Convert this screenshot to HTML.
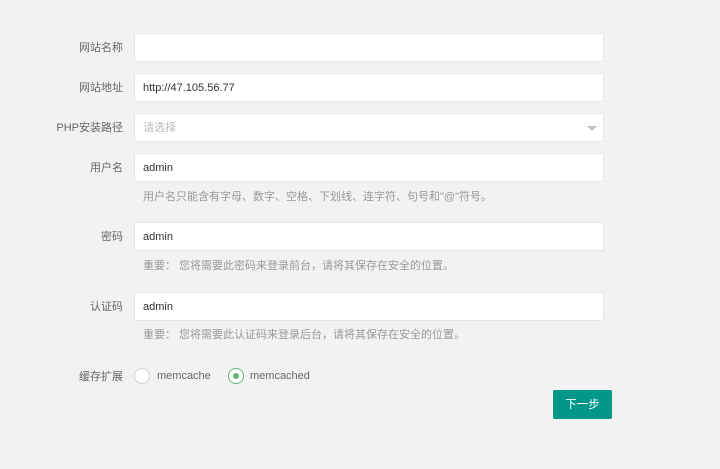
<!DOCTYPE html>
<html><head><meta charset="utf-8"><style>
body{margin:0;width:720px;height:469px;background:#f2f2f2;font-family:"Liberation Sans","Noto Sans CJK SC",sans-serif;font-size:11px;position:relative;overflow:hidden}
.l{position:absolute;left:0;width:123px;text-align:right;color:#666;line-height:29px;margin-top:1px}
.i{position:absolute;left:134px;height:27px;background:#fff;border:1px solid #e6e6e6;border-radius:2px;color:#333;line-height:29px;padding-left:8px;box-sizing:content-box;width:460px}
.h{position:absolute;left:143px;color:#999;line-height:14px;font-size:11px}
.r{position:absolute;top:368px;width:14px;height:14px;border:1px solid #d2d2d2;border-radius:50%;background:#fff}
.t{position:absolute;top:369px;color:#666;line-height:14px;font-size:11px}
</style></head><body>
<div class="l" style="top:33px">网站名称</div><div class="i" style="top:33px"></div>
<div class="l" style="top:73px">网站地址</div><div class="i" style="top:73px">http://47.105.56.77</div>
<div class="l" style="top:113px">PHP安装路径</div><div class="i" style="top:113px;color:#bbb">请选择</div>
<div style="position:absolute;left:587px;top:126px;width:0;height:0;border-left:5px solid transparent;border-right:5px solid transparent;border-top:5px solid #c2c2c2"></div>
<div class="l" style="top:153px">用户名</div><div class="i" style="top:153px">admin</div>
<div class="h" style="top:190px">用户名只能含有字母、数字、空格、下划线、连字符、句号和"@"符号。</div>
<div class="l" style="top:222px">密码</div><div class="i" style="top:222px">admin</div>
<div class="h" style="top:259px">重要： 您将需要此密码来登录前台，请将其保存在安全的位置。</div>
<div class="l" style="top:292px">认证码</div><div class="i" style="top:292px">admin</div>
<div class="h" style="top:328px">重要： 您将需要此认证码来登录后台，请将其保存在安全的位置。</div>
<div class="l" style="top:362px">缓存扩展</div>
<div class="r" style="left:134px"></div><div class="t" style="left:157px">memcache</div>
<div class="r" style="left:228px;border-color:#5fb878"><div style="position:absolute;left:4px;top:4px;width:6px;height:6px;border-radius:50%;background:#5fb878"></div></div>
<div class="t" style="left:250px">memcached</div>
<div style="position:absolute;left:553px;top:390px;width:59px;height:29px;background:#009688;color:#fff;text-align:center;line-height:30px;border-radius:2px;font-size:11.5px">下一步</div>
</body></html>
